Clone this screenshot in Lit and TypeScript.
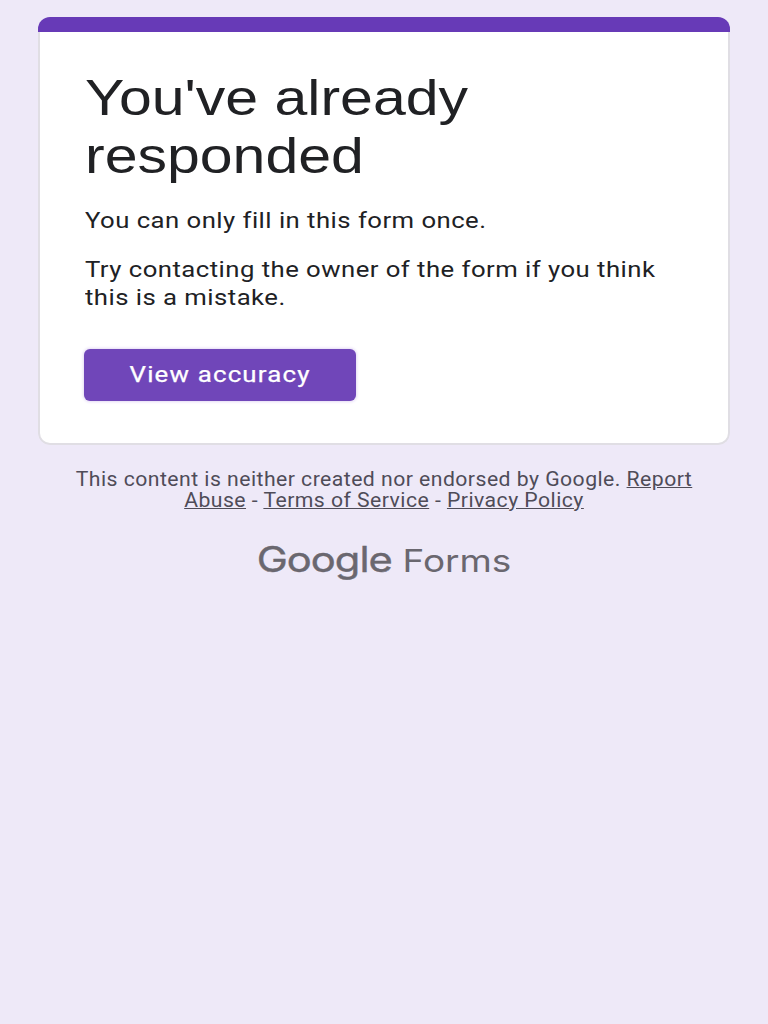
import { LitElement, html, css } from "lit";
import { customElement } from "lit/decorators.js";

@customElement("app-root")
export class AppRoot extends LitElement {
  static styles = css`
    :host { display: block; min-height: 1024px; background: #eee9f8; box-sizing: border-box; padding: 17px 38px 0; font-family: Roboto, "Liberation Sans", sans-serif; }
    .card { border-radius: 12px; overflow: hidden; height: 428px; display: flex; flex-direction: column; }
    .bar { height: 15px; background: #673ab7; flex: none; }
    .body { flex: 1; background: #fff; border: 2px solid #e0dee4; border-top: none; border-radius: 0 0 12px 12px; padding: 37px 45px 0; }
    h1 { margin: 0; font: 400 50px/58px "Liberation Sans", Arial, sans-serif; color: #202124; transform: scaleX(1.18); transform-origin: left; }
    p { margin: 0; color: #202124; font-size: 22px; line-height: 28px; letter-spacing: 0.4px; transform: scaleX(1.168); transform-origin: left; }
    .p1 { margin-top: 22px; }
    .p2 { margin-top: 21px; }
    .btn { margin: 37px 0 0 -1px; width: 272px; height: 52px; box-sizing: border-box; background: #7046b9; color: #fff; border-radius: 6px; display: flex; align-items: center; justify-content: center; box-shadow: 0 0 3px 1px #e4daf5; padding: 0 0 2px; }
    .btn span { display: inline-block; font: 400 22px Roboto, sans-serif; letter-spacing: 1px; -webkit-text-stroke: 0.25px #fff; transform: scaleX(1.175); }
    .note { margin-top: 24px; text-align: center; color: #4f4c58; font-size: 19.5px; line-height: 21px; letter-spacing: 0.42px; transform: scaleX(1.087); }
    a { color: inherit; text-decoration: underline; }
    .logo { margin-top: 27px; display: flex; justify-content: center; align-items: baseline; gap: 9px; color: #6a676f; transform: scaleX(1.19); }
    .g { font: 400 35px Inter, sans-serif; letter-spacing: -0.8px; -webkit-text-stroke: 0.4px #6a676f; }
    .f { font: 400 31px Inter, sans-serif; }
  `;
  render() {
    return html`
      <div class="card">
        <div class="bar"></div>
        <div class="body">
          <h1>You've already<br />responded</h1>
          <p class="p1">You can only fill in this form once.</p>
          <p class="p2">Try contacting the owner of the form if you think<br />this is a mistake.</p>
          <div class="btn"><span>View accuracy</span></div>
        </div>
      </div>
      <div class="note">This content is neither created nor endorsed by Google. <a href="#">Report<br />Abuse</a> - <a href="#">Terms of Service</a> - <a href="#">Privacy Policy</a></div>
      <div class="logo"><span class="g">Google</span><span class="f">Forms</span></div>
    `;
  }
}
